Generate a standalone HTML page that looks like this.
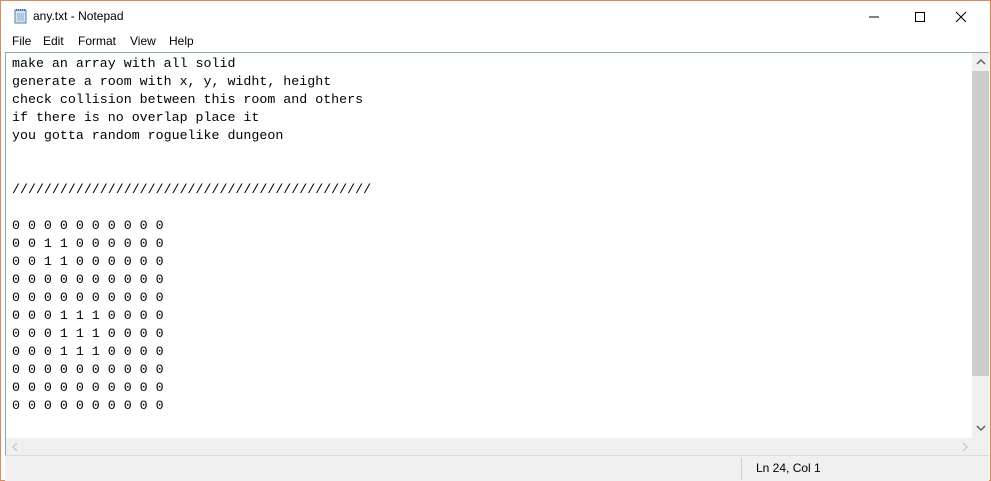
<!DOCTYPE html>
<html><head><style>
body{margin:0;width:991px;height:481px;overflow:hidden;background:#fff;position:relative;font-family:"Liberation Sans",sans-serif}
.win{position:absolute;left:0;top:0;width:989px;height:479px;border:1px solid #d98a5e;background:#fff}
.title{position:absolute;left:32px;top:8px;font-size:12px;color:#000}
.menu{position:absolute;top:33px;font-size:12px;color:#000}
.edit{position:absolute;left:4px;top:51px;width:983px;height:402px;border:1px solid #8aa8b8;border-right:none;background:#fff}
pre{position:absolute;left:6px;top:2px;margin:0;font-family:"Liberation Mono",monospace;font-size:13.3px;line-height:18px;color:#000}
.vs{position:absolute;left:966px;top:0;width:17px;height:385px;background:#f0f0f0}
.thumb{position:absolute;left:966px;top:18px;width:17px;height:305px;background:#cdcdcd}
.hs{position:absolute;left:0;top:385px;width:966px;height:17px;background:#f0f0f0}
.corner{position:absolute;left:966px;top:385px;width:17px;height:17px;background:#f0f0f0}
.status{position:absolute;left:4px;top:454px;width:984px;height:25px;background:#f0f0f0;border-top:1px solid #dadada}
</style></head><body>
<div class="win">
<svg style="position:absolute;left:12px;top:7px" width="16" height="16"><rect x="2" y="2" width="11" height="13" fill="#cfe3f3" stroke="#5a7fa0"/><path d="M3 2h10" stroke="#3b6ea5" stroke-width="2" stroke-dasharray="1 1"/><path d="M4 6h7M4 8h7M4 10h7M4 12h7" stroke="#8fb0cc"/></svg>
<div class="title">any.txt - Notepad</div>
<svg style="position:absolute;left:850px;top:8px" width="130" height="16"><path d="M18 8h10" stroke="#000"/><rect x="64.5" y="3.5" width="9" height="9" fill="none" stroke="#000"/><path d="M105 3l10 10M115 3l-10 10" stroke="#000"/></svg>
<span class="menu" style="left:11px">File</span>
<span class="menu" style="left:42px">Edit</span>
<span class="menu" style="left:77px">Format</span>
<span class="menu" style="left:129px">View</span>
<span class="menu" style="left:168px">Help</span>
<div class="edit">
<pre>make an array with all solid
generate a room with x, y, widht, height
check collision between this room and others
if there is no overlap place it
you gotta random roguelike dungeon


/////////////////////////////////////////////

0 0 0 0 0 0 0 0 0 0
0 0 1 1 0 0 0 0 0 0
0 0 1 1 0 0 0 0 0 0
0 0 0 0 0 0 0 0 0 0
0 0 0 0 0 0 0 0 0 0
0 0 0 1 1 1 0 0 0 0
0 0 0 1 1 1 0 0 0 0
0 0 0 1 1 1 0 0 0 0
0 0 0 0 0 0 0 0 0 0
0 0 0 0 0 0 0 0 0 0
0 0 0 0 0 0 0 0 0 0</pre>
<div class="vs"></div><div class="thumb"></div><div class="hs"></div><div class="corner"></div>
<svg style="position:absolute;left:970px;top:5px" width="10" height="8"><path d="M1 6l4-4 4 4" fill="none" stroke="#606060" stroke-width="1.5"/></svg>
<svg style="position:absolute;left:970px;top:371px" width="10" height="8"><path d="M1 2l4 4 4-4" fill="none" stroke="#606060" stroke-width="1.5"/></svg>
<svg style="position:absolute;left:5px;top:389px" width="8" height="10"><path d="M6 1l-4 4 4 4" fill="none" stroke="#c0c0c0" stroke-width="1.2"/></svg>
<svg style="position:absolute;left:955px;top:389px" width="8" height="10"><path d="M2 1l4 4-4 4" fill="none" stroke="#c0c0c0" stroke-width="1.2"/></svg>
</div>
<div class="status">
<div style="position:absolute;left:736px;top:2px;width:1px;height:22px;background:#d0d0d0"></div>
<span style="position:absolute;left:751px;top:5px;font-size:12px">Ln 24, Col 1</span>
</div>
</div>
</body></html>
